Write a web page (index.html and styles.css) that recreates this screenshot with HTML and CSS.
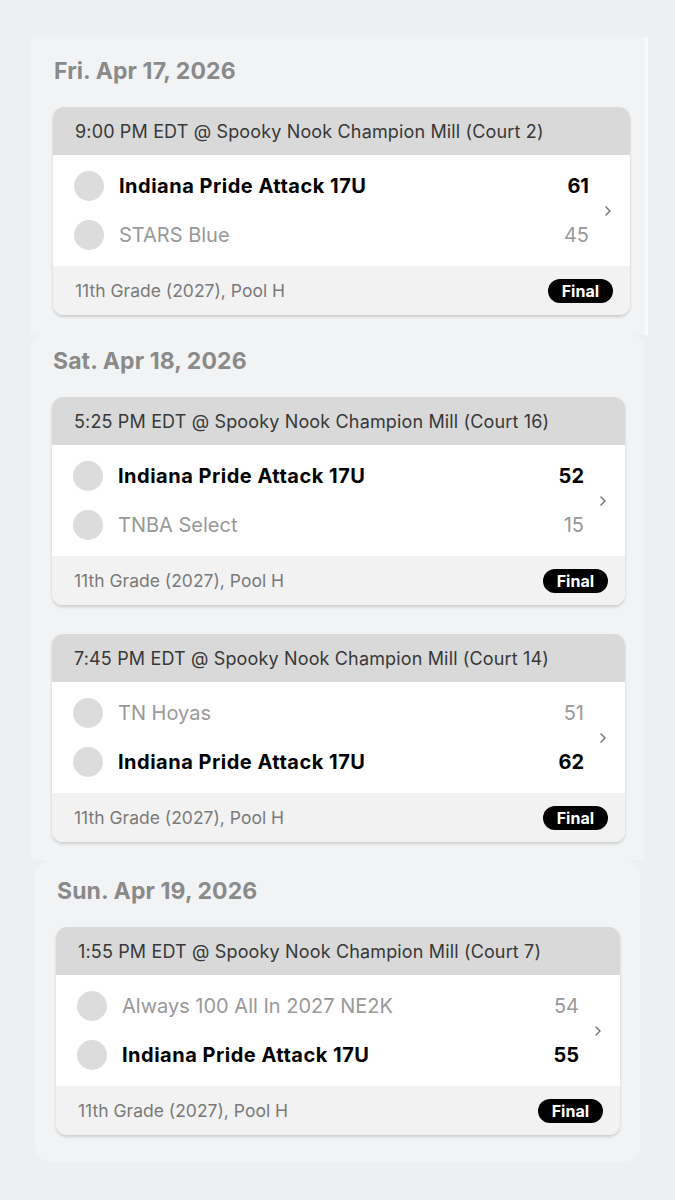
FILE: index.html
```html
<!DOCTYPE html>
<html>
  <head>
    <title>Schedule</title>
    <meta charset="utf-8" />
    <meta name="viewport" content="width=device-width, initial-scale=1" />
    <link rel="stylesheet" href="styles.css">
  </head>
  <body>
    <div class="day day-fri">
      <h2 class="day-title">Fri. Apr 17, 2026</h2>
      <div class="game">
        <div class="game-head">9:00 PM EDT @ Spooky Nook Champion Mill (Court 2)</div>
        <div class="game-body">
          <div class="teams">
            <div class="team win">
              <span class="logo"></span>
              <span class="name">Indiana Pride Attack 17U</span>
              <span class="score">61</span>
            </div>
            <div class="team">
              <span class="logo"></span>
              <span class="name">STARS Blue</span>
              <span class="score">45</span>
            </div>
          </div>
          <svg class="chev" width="8" height="12" viewBox="0 0 8 12"><polyline points="2,2 6,6 2,10" /></svg>
        </div>
        <div class="game-foot">
          <span>11th Grade (2027), Pool H</span>
          <span class="status">Final</span>
        </div>
      </div>
    </div>

    <div class="day day-sat">
      <h2 class="day-title">Sat. Apr 18, 2026</h2>
      <div class="game">
        <div class="game-head">5:25 PM EDT @ Spooky Nook Champion Mill (Court 16)</div>
        <div class="game-body">
          <div class="teams">
            <div class="team win">
              <span class="logo"></span>
              <span class="name">Indiana Pride Attack 17U</span>
              <span class="score">52</span>
            </div>
            <div class="team">
              <span class="logo"></span>
              <span class="name">TNBA Select</span>
              <span class="score">15</span>
            </div>
          </div>
          <svg class="chev" width="8" height="12" viewBox="0 0 8 12"><polyline points="2,2 6,6 2,10" /></svg>
        </div>
        <div class="game-foot">
          <span>11th Grade (2027), Pool H</span>
          <span class="status">Final</span>
        </div>
      </div>

      <div class="game">
        <div class="game-head">7:45 PM EDT @ Spooky Nook Champion Mill (Court 14)</div>
        <div class="game-body">
          <div class="teams">
            <div class="team">
              <span class="logo"></span>
              <span class="name">TN Hoyas</span>
              <span class="score">51</span>
            </div>
            <div class="team win">
              <span class="logo"></span>
              <span class="name">Indiana Pride Attack 17U</span>
              <span class="score">62</span>
            </div>
          </div>
          <svg class="chev" width="8" height="12" viewBox="0 0 8 12"><polyline points="2,2 6,6 2,10" /></svg>
        </div>
        <div class="game-foot">
          <span>11th Grade (2027), Pool H</span>
          <span class="status">Final</span>
        </div>
      </div>
    </div>

    <div class="day day-sun">
      <h2 class="day-title">Sun. Apr 19, 2026</h2>
      <div class="game">
        <div class="game-head">1:55 PM EDT @ Spooky Nook Champion Mill (Court 7)</div>
        <div class="game-body">
          <div class="teams">
            <div class="team">
              <span class="logo"></span>
              <span class="name">Always 100 All In 2027 NE2K</span>
              <span class="score">54</span>
            </div>
            <div class="team win">
              <span class="logo"></span>
              <span class="name">Indiana Pride Attack 17U</span>
              <span class="score">55</span>
            </div>
          </div>
          <svg class="chev" width="8" height="12" viewBox="0 0 8 12"><polyline points="2,2 6,6 2,10" /></svg>
        </div>
        <div class="game-foot">
          <span>11th Grade (2027), Pool H</span>
          <span class="status">Final</span>
        </div>
      </div>
    </div>
  </body>
</html>
```

FILE: styles.css
```css
* {
  box-sizing: border-box;
}
html,
body {
  margin: 0;
  font-family: "Inter", "Helvetica Neue", sans-serif;
  color: #333;
  background: #edf0f1;
}
body {
  padding-top: 37px;
}

.day {
  background: #f2f3f4;
}
.day-fri {
  margin-left: 31px;
  width: 617px;
  height: 298px;
  padding: 20px 15px 0 22px;
  border-right: 3px solid #f9fafa;
}
.day-sat {
  margin-left: 31px;
  width: 613px;
  height: 525px;
  padding: 12px 19px 0 21px;
  border-radius: 14px 14px 0 0;
}
.day-sun {
  margin-left: 35px;
  width: 605px;
  height: 302px;
  padding: 17px 20px 0 21px;
  border-radius: 16px;
}

.day-title {
  margin: 0 0 22px 1px;
  font-size: 23px;
  line-height: 28px;
  font-weight: 700;
  color: #8a8a8a;
  letter-spacing: 0.1px;
}

.game {
  background: #fff;
  border-radius: 11px;
  overflow: hidden;
  box-shadow: 0 2px 3px rgba(0, 0, 0, 0.16);
  margin-bottom: 29px;
}

.game-head {
  height: 48px;
  padding: 0 22px;
  display: flex;
  align-items: center;
  background: #d9d9d9;
  font-size: 18px;
  color: #383838;
  letter-spacing: 0.15px;
}

.game-body {
  display: flex;
  align-items: center;
  height: 111px;
  padding: 0 18px 0 21px;
}
.teams {
  flex: 1;
  display: flex;
  flex-direction: column;
  gap: 17px;
}
.team {
  display: flex;
  align-items: center;
  height: 32px;
  font-size: 20px;
  color: #999;
}
.logo {
  width: 30px;
  height: 30px;
  border-radius: 50%;
  background: #dcdcdc;
  margin-right: 15px;
}
.name {
  flex: 1;
}
.score {
  width: 40px;
  text-align: right;
  font-size: 20px;
}
.team.win {
  color: #000;
  font-weight: 700;
}
.team.win .name {
  letter-spacing: 0.5px;
}
.chev {
  margin-left: 15px;
  fill: none;
  stroke: #777;
  stroke-width: 1.5;
  stroke-linecap: round;
  stroke-linejoin: round;
}

.game-foot {
  height: 49px;
  display: flex;
  align-items: center;
  justify-content: space-between;
  padding: 0 17px 0 22px;
  background: #f2f2f3;
  font-size: 17.5px;
  color: #7a7a7a;
}
.status {
  background: #000;
  color: #fff;
  font-weight: 700;
  font-size: 16px;
  height: 24px;
  line-height: 24px;
  padding: 0 14px;
  border-radius: 12px;
}
```
